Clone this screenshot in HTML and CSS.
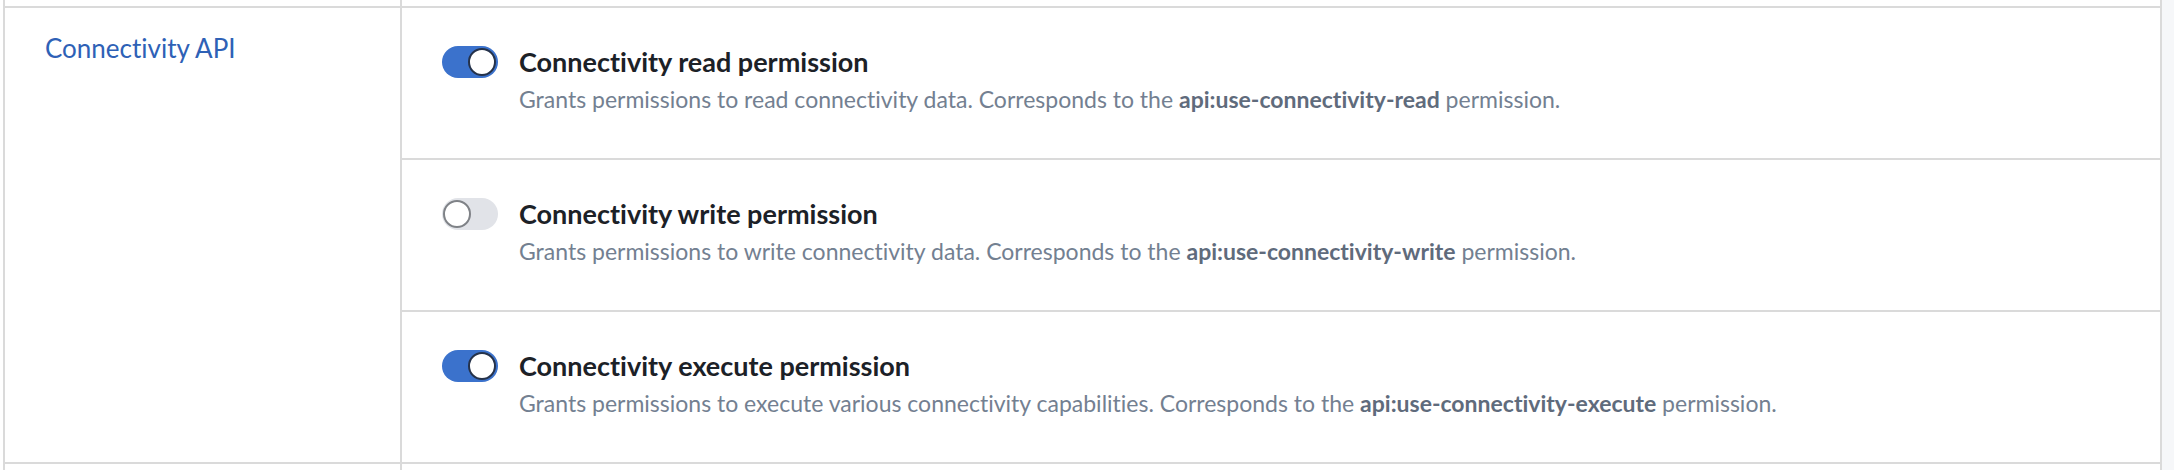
FILE: index.html
```html
<!DOCTYPE html>
<html lang="en">
<head>
  <meta charset="UTF-8">
  <title>Connectivity API permissions</title>
  <link rel="stylesheet" href="styles.css">
</head>
<body>

<div class="page">
  <div class="table">
    <!-- tail of the previous section -->
    <div class="section section-edge">
      <div class="label-cell"></div>
      <div class="perm-cell"></div>
    </div>

    <div class="section">
      <div class="label-cell">
        <a class="label" href="#">Connectivity API</a>
      </div>
      <div class="perm-cell">
        <div class="perm">
          <div class="perm-head">
            <span class="toggle on"><span class="knob"></span></span>
            <span class="perm-title">Connectivity read permission</span>
          </div>
          <p class="perm-desc">Grants permissions to read connectivity data. Corresponds to the <strong>api:use-connectivity-read</strong> permission.</p>
        </div>
        <div class="perm">
          <div class="perm-head">
            <span class="toggle"><span class="knob"></span></span>
            <span class="perm-title">Connectivity write permission</span>
          </div>
          <p class="perm-desc">Grants permissions to write connectivity data. Corresponds to the <strong>api:use-connectivity-write</strong> permission.</p>
        </div>
        <div class="perm">
          <div class="perm-head">
            <span class="toggle on"><span class="knob"></span></span>
            <span class="perm-title">Connectivity execute permission</span>
          </div>
          <p class="perm-desc">Grants permissions to execute various connectivity capabilities. Corresponds to the <strong>api:use-connectivity-execute</strong> permission.</p>
        </div>
      </div>
    </div>

    <!-- start of the next section -->
    <div class="section section-edge">
      <div class="label-cell"></div>
      <div class="perm-cell"></div>
    </div>
  </div>
  <div class="scroll-track"></div>
</div>

</body>
</html>
```

FILE: styles.css
```css
html, body {
  margin: 0;
  height: 100%;
  overflow: hidden;
}
body {
  font-family: 'Lato', 'Liberation Sans', sans-serif;
  font-variant-ligatures: none;
  background: #fff;
  color: #1c2127;
}
.page {
  display: flex;
  height: 100vh;
  padding-left: 3px;
  box-sizing: border-box;
}
.table {
  flex: 1;
  overflow: hidden;
  border-left: 2px solid #dadada;
  border-right: 2px solid #dadada;
}
.section {
  display: grid;
  grid-template-columns: 397px 1fr;
  border-bottom: 2px solid #dadada;
}
.section-edge {
  height: 6px;
}
.section-edge:last-child {
  border-bottom: none;
}
.label-cell {
  border-right: 2px solid #dadada;
  padding: 24px 40px;
}
.label {
  font-size: 26px;
  line-height: 32px;
  color: #2e61b6;
  text-decoration: none;
}
.perm {
  padding: 38px 40px 44px;
  border-bottom: 2px solid #dadada;
}
.perm:last-child {
  border-bottom: none;
}
.perm-head {
  display: flex;
  align-items: center;
  gap: 21px;
  height: 32px;
}
.perm-title {
  font-size: 27px;
  font-weight: 700;
  line-height: 32px;
  color: #1c2127;
}
.perm-desc {
  margin: 6px 0 0 77px;
  font-size: 23px;
  line-height: 30px;
  color: #738091;
}
.perm-desc strong {
  font-weight: 700;
  color: #5f6b7c;
}
.toggle {
  display: flex;
  align-items: center;
  width: 56px;
  height: 32px;
  padding: 2px 2px 2px 1px;
  box-sizing: border-box;
  border-radius: 16px;
  background: #e1e3e8;
}
.toggle.on {
  justify-content: flex-end;
  background: #3b72cc;
}
.knob {
  width: 28px;
  height: 28px;
  box-sizing: border-box;
  border-radius: 50%;
  background: #fff;
  border: 2px solid #7f8287;
}
.toggle.on .knob {
  border-color: #25324a;
}
.scroll-track {
  width: 12px;
  background: #f6f7f9;
}
```
